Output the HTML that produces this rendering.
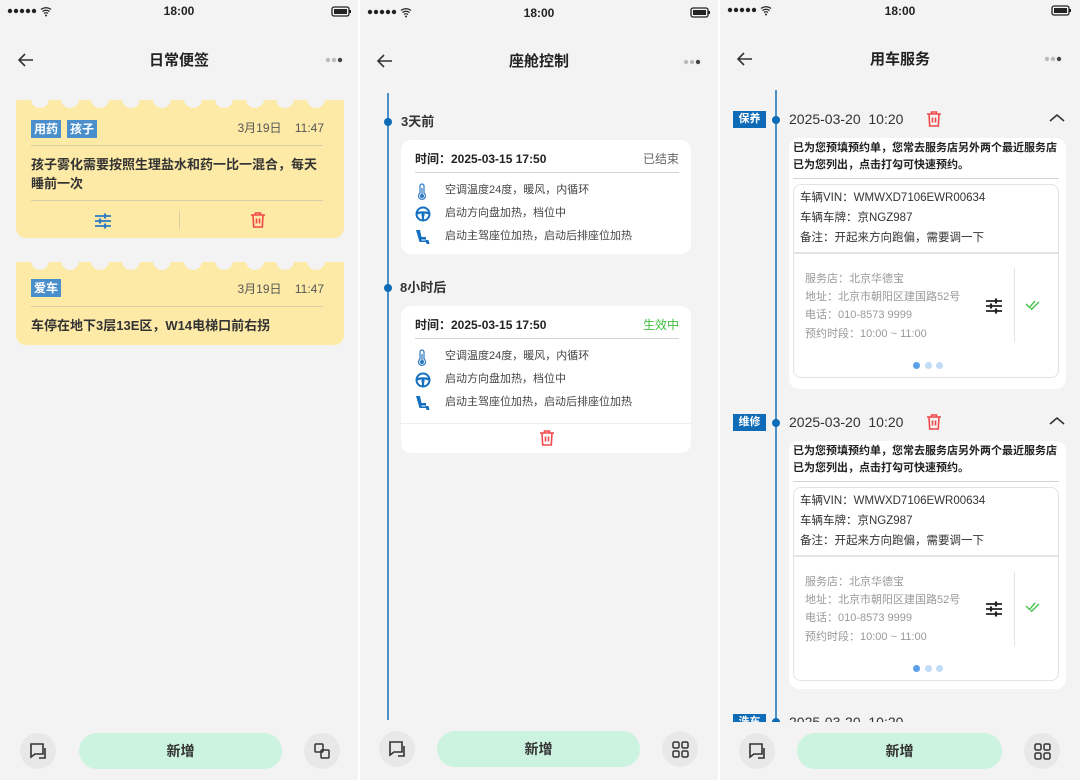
<!DOCTYPE html>
<html><head><meta charset="utf-8">
<style>
*{margin:0;padding:0;box-sizing:border-box}
body{width:1080px;height:780px;background:#fff;position:relative;overflow:hidden;font-family:"Liberation Sans","Noto Sans CJK SC",sans-serif;color:#333}
.p{position:absolute;top:0;height:780px;background:#f2f3f2;overflow:hidden}
.a{position:absolute}
.t{position:absolute;white-space:nowrap;line-height:1}
.sb{font-size:12px;font-weight:bold;color:#222}
.title{font-size:15px;font-weight:bold;color:#222;width:100%;text-align:center}
.tag{position:absolute;background:#4a8fcc;color:#fff;font-size:12px;font-weight:bold;line-height:18px;padding:0 3px;height:18px}
.card{position:absolute;background:#fff;border-radius:10px}
.ycard{position:absolute;background:#fdeaa7;border-radius:0 0 10px 10px}
.hr{position:absolute;height:1px;background:#d3d3d3}
.btm{position:absolute;left:0;right:0;bottom:0;height:58px;background:#f2f3f2}
.cb{position:absolute;width:36px;height:36px;border-radius:18px;background:#e8e8e8}
.pill{position:absolute;width:203px;height:36px;border-radius:18px;background:#ccf3e0;font-size:14px;font-weight:bold;text-align:center;line-height:36px;color:#333}
.stag{position:absolute;background:#0e6bb7;color:#fff;font-size:11px;font-weight:bold;width:33px;height:17px;line-height:17px;text-align:center}
</style></head><body>

<svg width="0" height="0" style="position:absolute">
<defs>
<g id="st"><circle cx="3" cy="5" r="2.2" fill="#222"/><circle cx="9" cy="5" r="2.2" fill="#222"/><circle cx="15" cy="5" r="2.2" fill="#222"/><circle cx="21" cy="5" r="2.2" fill="#222"/><circle cx="27" cy="5" r="2.2" fill="#222"/><path d="M34 3.5a8 8 0 0 1 10 0M35.5 5.5a5.5 5.5 0 0 1 7 0M37 7.5a3 3 0 0 1 4 0" stroke="#222" stroke-width="1.3" fill="none"/><circle cx="39" cy="9.5" r="1" fill="#222"/></g>
<g id="bat"><rect x="1" y="1" width="17" height="9" rx="2" fill="none" stroke="#222" stroke-width="1.3"/><rect x="3" y="3" width="13" height="5" fill="#222"/><rect x="18.5" y="4" width="1.5" height="3" fill="#222"/></g>
<g id="back"><path d="M16 7H2M8 1L2 7l6 6" stroke="#333" stroke-width="1.6" fill="none"/></g>
<g id="more"><circle cx="3" cy="3" r="2.2" fill="#bbb"/><circle cx="9" cy="3" r="2.2" fill="#bbb"/><circle cx="15" cy="3" r="2.2" fill="#444"/></g>
<g id="trash"><path d="M2 4h14M6.5 4V2h5v2M4 4l.7 12h8.6L14 4M7.5 7.5v5M10.5 7.5v5" stroke="#f0484a" stroke-width="1.6" fill="none"/></g>
<g id="sl"><path d="M1 4h16M1 9h16M1 14h16" stroke="#222" stroke-width="1.7"/><path d="M11 1.5v5M6 6.5v5M11 11.5v5" stroke="#222" stroke-width="2.2"/></g>
<g id="chat"><path d="M2 2h12v10H6l-4 3z" fill="none" stroke="#333" stroke-width="1.6"/><path d="M16 6v10h-6" fill="none" stroke="#333" stroke-width="1.6"/></g>
<g id="grid"><rect x="2" y="2" width="6" height="6" rx="1.5" fill="none" stroke="#333" stroke-width="1.5"/><rect x="11" y="2" width="6" height="6" rx="1.5" fill="none" stroke="#333" stroke-width="1.5"/><rect x="2" y="11" width="6" height="6" rx="1.5" fill="none" stroke="#333" stroke-width="1.5"/><rect x="11" y="11" width="6" height="6" rx="1.5" fill="none" stroke="#333" stroke-width="1.5"/></g>
<g id="thermo"><path d="M6 2a2 2 0 0 1 2 2v7a3.5 3.5 0 1 1-4 0V4a2 2 0 0 1 2-2z" fill="none" stroke="#2b78c2" stroke-width="1.2"/><circle cx="6" cy="14" r="2" fill="#2b78c2"/><rect x="5.4" y="6" width="1.2" height="7" fill="#2b78c2"/></g>
<g id="wheel"><circle cx="8" cy="8" r="6.5" fill="none" stroke="#1670c0" stroke-width="2"/><path d="M2 7.5c3-1.5 9-1.5 12 0M8 9v5" stroke="#1670c0" stroke-width="2.2" fill="none"/><circle cx="8" cy="9" r="1.6" fill="#1670c0"/></g>
<g id="seat"><path d="M1 1h4l1.5 7H11v3h2.5l1 4h-3l-.5-2H4.5z" fill="#1670c0"/><path d="M6.5 11h4" stroke="#fff" stroke-width="1"/></g>
<g id="chk"><path d="M1 6l3.5 3.5L10 3" stroke="#45c24a" stroke-width="1.4" fill="none"/><path d="M5.5 10l1.2 1.2L14 4" stroke="#45c24a" stroke-width="1.4" fill="none"/></g>
</defs></svg>

<!-- PANEL 1 -->
<div class="p" style="left:0;width:358px">
 <svg class="a" style="left:7px;top:6px" width="50" height="12"><use href="#st"/></svg>
 <div class="t sb" style="left:0;width:358px;text-align:center;top:5px">18:00</div>
 <svg class="a" style="left:331px;top:6px" width="22" height="12"><use href="#bat"/></svg>
 <svg class="a" style="left:17px;top:53px" width="18" height="14"><use href="#back"/></svg>
 <div class="t title" style="left:0;top:53px">日常便签</div>
 <svg class="a" style="left:325px;top:57px" width="18" height="6"><use href="#more"/></svg>

 <div class="ycard" style="left:16px;top:100px;width:328px;height:138px"></div>
 <div class="ycard" style="left:16px;top:262px;width:328px;height:83px"></div>
 <svg class="a" style="left:16px;top:90px" width="328" height="190">
  <g fill="#f2f3f2">
   <circle cx="24" cy="9" r="9"/><circle cx="54" cy="9" r="9"/><circle cx="84" cy="9" r="9"/><circle cx="115" cy="9" r="9"/><circle cx="146" cy="9" r="9"/><circle cx="177" cy="9" r="9"/><circle cx="208" cy="9" r="9"/><circle cx="239" cy="9" r="9"/><circle cx="269" cy="9" r="9"/><circle cx="300" cy="9" r="9"/>
   <circle cx="24" cy="171" r="9"/><circle cx="54" cy="171" r="9"/><circle cx="84" cy="171" r="9"/><circle cx="115" cy="171" r="9"/><circle cx="146" cy="171" r="9"/><circle cx="177" cy="171" r="9"/><circle cx="208" cy="171" r="9"/><circle cx="239" cy="171" r="9"/><circle cx="269" cy="171" r="9"/><circle cx="300" cy="171" r="9"/>
  </g>
 </svg>
 <div class="tag" style="left:31px;top:120px">用药</div>
 <div class="tag" style="left:67px;top:120px">孩子</div>
 <div class="t" style="right:34px;top:122px;font-size:12px;color:#555">3月19日&nbsp;&nbsp;&nbsp;&nbsp;11:47</div>
 <div class="hr" style="left:31px;top:145px;width:292px;background:#d8cfa8"></div>
 <div class="a" style="left:31px;top:155px;width:296px;font-size:13px;font-weight:bold;line-height:19px;color:#333">孩子雾化需要按照生理盐水和药一比一混合，每天睡前一次</div>
 <div class="hr" style="left:31px;top:200px;width:292px;background:#d8cfa8"></div>
 <div class="a" style="left:179px;top:211px;width:1px;height:18px;background:#d8cfa8"></div>
 <svg class="a" style="left:94px;top:212px" width="18" height="18"><path d="M1 4h16M1 9h16M1 14h16" stroke="#2a7ac4" stroke-width="1.7"/><path d="M11 1.5v5M6 6.5v5M11 11.5v5" stroke="#2a7ac4" stroke-width="2.2"/></svg>
 <svg class="a" style="left:249px;top:211px" width="18" height="18"><use href="#trash"/></svg>
 <div class="tag" style="left:31px;top:279px">爱车</div>
 <div class="t" style="right:34px;top:283px;font-size:12px;color:#555">3月19日&nbsp;&nbsp;&nbsp;&nbsp;11:47</div>
 <div class="hr" style="left:31px;top:306px;width:292px;background:#d8cfa8"></div>
 <div class="t" style="left:31px;top:319px;font-size:13px;font-weight:bold;color:#333">车停在地下3层13E区，W14电梯口前右拐</div>

 <div class="cb" style="left:20px;top:733px"></div>
 <svg class="a" style="left:29px;top:742px" width="19" height="19"><use href="#chat"/></svg>
 <div class="pill" style="left:79px;top:733px">新增</div>
 <div class="cb" style="left:304px;top:733px"></div>
 <svg class="a" style="left:313px;top:742px" width="19" height="19"><rect x="2" y="2" width="8" height="8" rx="1" fill="none" stroke="#333" stroke-width="1.5"/><rect x="8" y="8" width="8" height="8" rx="1" fill="none" stroke="#333" stroke-width="1.5"/></svg>
</div>

<!-- PANEL 2 -->
<div class="p" style="left:360px;width:358px">
 <svg class="a" style="left:7px;top:7px" width="50" height="12"><use href="#st"/></svg>
 <div class="t sb" style="left:0;width:358px;text-align:center;top:7px">18:00</div>
 <svg class="a" style="left:330px;top:7px" width="22" height="12"><use href="#bat"/></svg>
 <svg class="a" style="left:16px;top:54px" width="18" height="14"><use href="#back"/></svg>
 <div class="t title" style="left:0;top:54px">座舱控制</div>
 <svg class="a" style="left:323px;top:59px" width="18" height="6"><use href="#more"/></svg>

 <div class="a" style="left:27px;top:93px;width:2px;height:627px;background:#4b8fcd"></div>
 <div class="a" style="left:24px;top:118px;width:8px;height:8px;border-radius:4px;background:#0e6bb7"></div>
 <div class="t" style="left:41px;top:115px;font-size:13px;font-weight:bold;color:#333">3天前</div>
 <div class="a" style="left:24px;top:284px;width:8px;height:8px;border-radius:4px;background:#0e6bb7"></div>
 <div class="t" style="left:40px;top:281px;font-size:13px;font-weight:bold;color:#333">8小时后</div>

 <div class="card" style="left:41px;top:140px;width:290px;height:114px"></div>
 <div class="t" style="left:55px;top:153px;font-size:12px;font-weight:bold;color:#222">时间：2025-03-15 17:50</div>
 <div class="t" style="right:39px;top:153px;font-size:12px;color:#666">已结束</div>
 <div class="hr" style="left:55px;top:172px;width:264px"></div>
 <svg class="a" style="left:56px;top:182px" width="14" height="18"><use href="#thermo"/></svg>
 <div class="t" style="left:85px;top:185px;font-size:11px;color:#444">空调温度24度，暖风，内循环</div>
 <svg class="a" style="left:55px;top:206px" width="16" height="16"><use href="#wheel"/></svg>
 <div class="t" style="left:85px;top:208px;font-size:11px;color:#444">启动方向盘加热，档位中</div>
 <svg class="a" style="left:55px;top:229px" width="16" height="16"><use href="#seat"/></svg>
 <div class="t" style="left:85px;top:231px;font-size:11px;color:#444">启动主驾座位加热，启动后排座位加热</div>

 <div class="card" style="left:41px;top:306px;width:290px;height:147px"></div>
 <div class="t" style="left:55px;top:319px;font-size:12px;font-weight:bold;color:#222">时间：2025-03-15 17:50</div>
 <div class="t" style="right:39px;top:319px;font-size:12px;color:#3fbf3f">生效中</div>
 <div class="hr" style="left:55px;top:338px;width:264px"></div>
 <svg class="a" style="left:56px;top:348px" width="14" height="18"><use href="#thermo"/></svg>
 <div class="t" style="left:85px;top:351px;font-size:11px;color:#444">空调温度24度，暖风，内循环</div>
 <svg class="a" style="left:55px;top:372px" width="16" height="16"><use href="#wheel"/></svg>
 <div class="t" style="left:85px;top:374px;font-size:11px;color:#444">启动方向盘加热，档位中</div>
 <svg class="a" style="left:55px;top:395px" width="16" height="16"><use href="#seat"/></svg>
 <div class="t" style="left:85px;top:397px;font-size:11px;color:#444">启动主驾座位加热，启动后排座位加热</div>
 <div class="hr" style="left:41px;top:423px;width:290px;background:#eee"></div>
 <svg class="a" style="left:178px;top:429px" width="18" height="18"><use href="#trash"/></svg>

 <div class="cb" style="left:19px;top:731px"></div>
 <svg class="a" style="left:28px;top:740px" width="19" height="19"><use href="#chat"/></svg>
 <div class="pill" style="left:77px;top:731px">新增</div>
 <div class="cb" style="left:302px;top:731px"></div>
 <svg class="a" style="left:311px;top:740px" width="19" height="19"><use href="#grid"/></svg>
</div>

<!-- PANEL 3 -->
<div class="p" style="left:720px;width:360px">
 <svg class="a" style="left:7px;top:5px" width="50" height="12"><use href="#st"/></svg>
 <div class="t sb" style="left:0;width:360px;text-align:center;top:5px">18:00</div>
 <svg class="a" style="left:331px;top:5px" width="22" height="12"><use href="#bat"/></svg>
 <svg class="a" style="left:16px;top:52px" width="18" height="14"><use href="#back"/></svg>
 <div class="t title" style="left:0;top:52px">用车服务</div>
 <svg class="a" style="left:324px;top:56px" width="18" height="6"><use href="#more"/></svg>

 <div class="a" style="left:55px;top:90px;width:2px;height:640px;background:#4b8fcd"></div>

 <div class="stag" style="left:13px;top:111px">保养</div>
 <div class="a" style="left:52px;top:116px;width:8px;height:8px;border-radius:4px;background:#0e6bb7"></div>
 <div class="t" style="left:69px;top:112px;font-size:14px;color:#333">2025-03-20&nbsp;&nbsp;10:20</div>
 <svg class="a" style="left:205px;top:110px" width="18" height="18"><use href="#trash"/></svg>
 <svg class="a" style="left:329px;top:113px" width="16" height="10"><path d="M1 8l7-6 7 6" stroke="#333" stroke-width="1.6" fill="none"/></svg>
 <div class="card" style="left:69px;top:138px;width:277px;height:251px"></div>
 <div class="a" style="left:73px;top:140px;width:270px;font-size:11px;font-weight:bold;line-height:17px;color:#222">已为您预填预约单，您常去服务店另外两个最近服务店已为您列出，点击打勾可快速预约。</div>
 <div class="hr" style="left:73px;top:178px;width:266px"></div>
 <div class="a" style="left:73px;top:184px;width:266px;height:194px;border:1px solid #e3e3e3;border-radius:8px"></div>
 <div class="t" style="left:80px;top:193px;font-size:11.5px;color:#333">车辆VIN：WMWXD7106EWR00634</div>
 <div class="t" style="left:80px;top:213px;font-size:11.5px;color:#333">车辆车牌：京NGZ987</div>
 <div class="t" style="left:80px;top:233px;font-size:11.5px;color:#333">备注：开起来方向跑偏，需要调一下</div>
 <div class="hr" style="left:74px;top:252px;width:264px;height:2px;background:#e3e3e3"></div>
 <div class="t" style="left:85px;top:274px;font-size:11px;color:#999">服务店：北京华德宝</div>
 <div class="t" style="left:85px;top:292px;font-size:11px;color:#999">地址：北京市朝阳区建国路52号</div>
 <div class="t" style="left:85px;top:310px;font-size:11px;color:#999">电话：010-8573 9999</div>
 <div class="t" style="left:85px;top:329px;font-size:11px;color:#999">预约时段：10:00 ~ 11:00</div>
 <svg class="a" style="left:265px;top:297px" width="18" height="18"><use href="#sl"/></svg>
 <div class="a" style="left:294px;top:268px;width:1px;height:74px;background:#e3e3e3"></div>
 <svg class="a" style="left:305px;top:298px" width="16" height="14"><use href="#chk"/></svg>
 <div class="a" style="left:193px;top:362px;width:7px;height:7px;border-radius:4px;background:#5aa0ea"></div>
 <div class="a" style="left:205px;top:362px;width:7px;height:7px;border-radius:4px;background:#c1dcf7"></div>
 <div class="a" style="left:216px;top:362px;width:7px;height:7px;border-radius:4px;background:#c1dcf7"></div>

 <div class="stag" style="left:13px;top:414px">维修</div>
 <div class="a" style="left:52px;top:419px;width:8px;height:8px;border-radius:4px;background:#0e6bb7"></div>
 <div class="t" style="left:69px;top:415px;font-size:14px;color:#333">2025-03-20&nbsp;&nbsp;10:20</div>
 <svg class="a" style="left:205px;top:413px" width="18" height="18"><use href="#trash"/></svg>
 <svg class="a" style="left:329px;top:416px" width="16" height="10"><path d="M1 8l7-6 7 6" stroke="#333" stroke-width="1.6" fill="none"/></svg>
 <div class="card" style="left:69px;top:441px;width:277px;height:248px"></div>
 <div class="a" style="left:73px;top:443px;width:270px;font-size:11px;font-weight:bold;line-height:17px;color:#222">已为您预填预约单，您常去服务店另外两个最近服务店已为您列出，点击打勾可快速预约。</div>
 <div class="hr" style="left:73px;top:481px;width:266px"></div>
 <div class="a" style="left:73px;top:487px;width:266px;height:194px;border:1px solid #e3e3e3;border-radius:8px"></div>
 <div class="t" style="left:80px;top:496px;font-size:11.5px;color:#333">车辆VIN：WMWXD7106EWR00634</div>
 <div class="t" style="left:80px;top:516px;font-size:11.5px;color:#333">车辆车牌：京NGZ987</div>
 <div class="t" style="left:80px;top:536px;font-size:11.5px;color:#333">备注：开起来方向跑偏，需要调一下</div>
 <div class="hr" style="left:74px;top:555px;width:264px;height:2px;background:#e3e3e3"></div>
 <div class="t" style="left:85px;top:577px;font-size:11px;color:#999">服务店：北京华德宝</div>
 <div class="t" style="left:85px;top:595px;font-size:11px;color:#999">地址：北京市朝阳区建国路52号</div>
 <div class="t" style="left:85px;top:613px;font-size:11px;color:#999">电话：010-8573 9999</div>
 <div class="t" style="left:85px;top:632px;font-size:11px;color:#999">预约时段：10:00 ~ 11:00</div>
 <svg class="a" style="left:265px;top:600px" width="18" height="18"><use href="#sl"/></svg>
 <div class="a" style="left:294px;top:572px;width:1px;height:74px;background:#e3e3e3"></div>
 <svg class="a" style="left:305px;top:600px" width="16" height="14"><use href="#chk"/></svg>
 <div class="a" style="left:193px;top:665px;width:7px;height:7px;border-radius:4px;background:#5aa0ea"></div>
 <div class="a" style="left:205px;top:665px;width:7px;height:7px;border-radius:4px;background:#c1dcf7"></div>
 <div class="a" style="left:216px;top:665px;width:7px;height:7px;border-radius:4px;background:#c1dcf7"></div>

 <div class="stag" style="left:13px;top:714px">洗车</div>
 <div class="a" style="left:52px;top:718px;width:8px;height:8px;border-radius:4px;background:#0e6bb7"></div>
 <div class="t" style="left:69px;top:715px;font-size:14px;color:#333">2025-03-20&nbsp;&nbsp;10:20</div>

 <div class="btm" style="top:722px"></div>
 <div class="cb" style="left:19px;top:733px"></div>
 <svg class="a" style="left:28px;top:742px" width="19" height="19"><use href="#chat"/></svg>
 <div class="pill" style="left:77px;top:733px;width:205px">新增</div>
 <div class="cb" style="left:304px;top:733px"></div>
 <svg class="a" style="left:313px;top:742px" width="19" height="19"><use href="#grid"/></svg>
</div>
</body></html>
